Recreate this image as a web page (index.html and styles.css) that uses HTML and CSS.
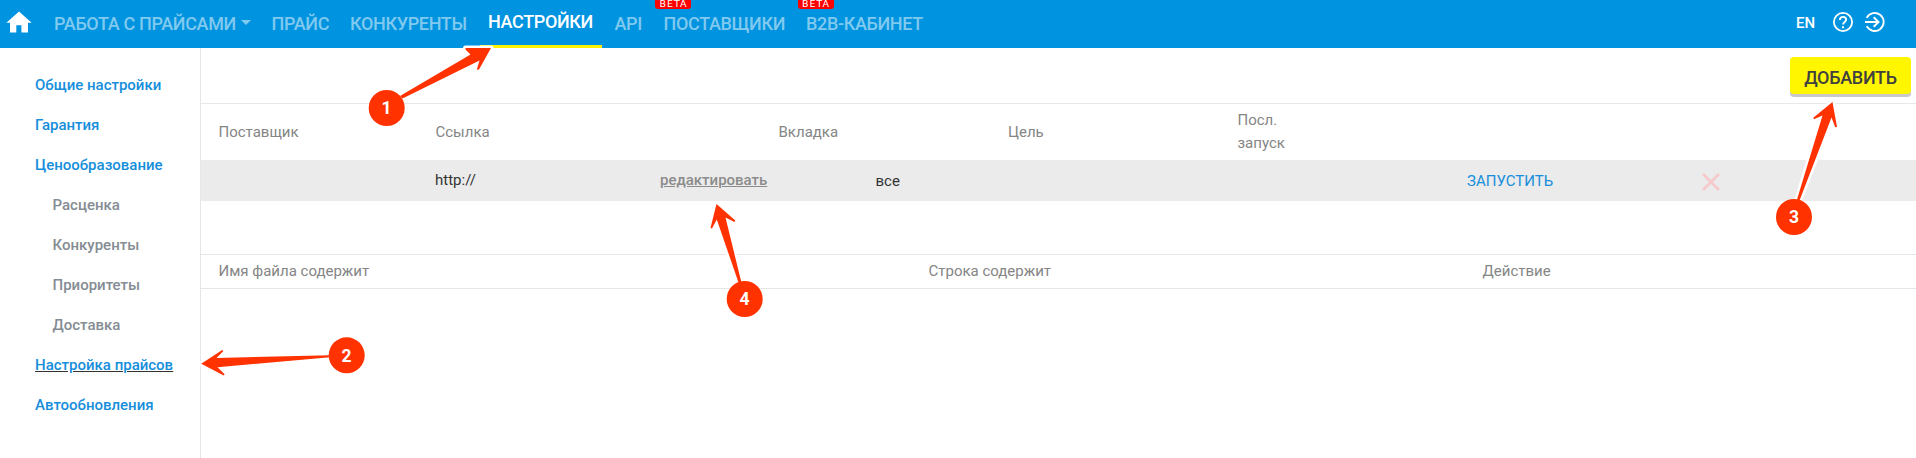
FILE: index.html
```html
<!DOCTYPE html>
<html lang="ru">
<head>
<meta charset="utf-8">
<title>Настройка прайсов</title>
<link rel="stylesheet" href="styles.css">
</head>
<body>
<header class="topbar">
  <a class="home"><svg width="26" height="22" viewBox="0 0 26 22"><path d="M13 0.6 0.4 11.8H4V21.4H10.3V14.2H15.4V21.4H22V11.8H25.6Z" fill="#fff"/></svg></a>
  <nav class="nav">
    <a class="nav-item nav-prices"><span>РАБОТА С ПРАЙСАМИ</span><i class="caret"></i></a>
    <a class="nav-item nav-price"><span>ПРАЙС</span></a>
    <a class="nav-item nav-rivals"><span>КОНКУРЕНТЫ</span></a>
    <a class="nav-item nav-settings active"><span>НАСТРОЙКИ</span></a>
    <a class="nav-item nav-api"><span>API</span></a>
    <a class="nav-item nav-suppliers"><span>ПОСТАВЩИКИ</span><b class="beta">BETA</b></a>
    <a class="nav-item nav-b2b"><span>B2B-КАБИНЕТ</span><b class="beta">BETA</b></a>
  </nav>
  <div class="tools">
    <span class="lang">EN</span>
    <svg class="help" width="20" height="20" viewBox="0 0 20 20" fill="none" stroke="#fff"><circle cx="10" cy="10" r="9.1" stroke-width="1.8"/><path d="M6.9 8c0-1.900 1.300-3.100 3.100-3.100S13.100 6.100 13.100 7.800C13.100 9.900 10 10.100 10 12.600" stroke-width="1.900"/><path d="M10 14.200v2" stroke-width="2"/></svg>
    <svg class="logout" width="20" height="20" viewBox="0 0 20 20" fill="none" stroke="#fff" stroke-width="1.8"><path d="M1.700 5.800A9 9 0 1 1 1.700 14.200"/><path d="M0 10H13M8.700 5.200 13.500 10 8.700 14.800" stroke-width="2"/></svg>
  </div>
</header>
<div class="layout">
  <aside class="sidebar">
    <a class="side-link">Общие настройки</a>
    <a class="side-link">Гарантия</a>
    <a class="side-link">Ценообразование</a>
    <a class="side-link sub">Расценка</a>
    <a class="side-link sub">Конкуренты</a>
    <a class="side-link sub">Приоритеты</a>
    <a class="side-link sub">Доставка</a>
    <a class="side-link current"><span>Настройка прайсов</span></a>
    <a class="side-link">Автообновления</a>
  </aside>
  <main class="content">
    <div class="actions"><button class="add">ДОБАВИТЬ</button></div>
    <div class="table-head">
      <span>Поставщик</span><span>Ссылка</span><span>Вкладка</span><span>Цель</span><span>Посл.<br>запуск</span>
    </div>
    <div class="table-row">
      <span class="url">http://</span>
      <a class="edit">редактировать</a>
      <span>все</span>
      <a class="run">ЗАПУСТИТЬ</a>
      <svg class="remove" width="18" height="18" viewBox="0 0 18 18"><path d="M1 1 17 17M17 1 1 17" stroke="#f6caca" stroke-width="2.6"/></svg>
    </div>
    <div class="rules-head">
      <span>Имя файла содержит</span><span>Строка содержит</span><span>Действие</span>
    </div>
  </main>
</div>
<svg class="callouts" width="1916" height="458" viewBox="0 0 1916 458">
  <g class="arrows">
    <path d="M400 96 470.500 54.500 465.500 49.500V48H491L479 69.500 476.800 69.800 479.500 60.500 402.500 98.500Z"/>
    <path d="M330 355.200 216.500 358 223.400 351 222.200 350 201.200 363.800 223.800 375.600 224.600 374.200 217.500 367.300 330 357.200Z"/>
    <path d="M1797 199.500 1822.500 115.500 1814 119.200 1813.300 117.800 1832.500 102 1837 127 1835.300 127.200 1831.500 117.500 1799.500 200.500Z"/>
    <path d="M741.300 282 725.500 217.500 734.500 222 735.300 220.500 716.500 204 710.500 228 712 228.600 716.800 219.500 738.500 282.500Z"/>
  </g>
  <g class="dots">
    <circle cx="386.700" cy="108" r="18"/><circle cx="346.700" cy="355.300" r="18"/><circle cx="1794" cy="217" r="18"/><circle cx="744.700" cy="299" r="18"/>
  </g>
  <g class="numbers">
    <text x="386.500" y="114">1</text><text x="346.500" y="362">2</text><text x="1794" y="223">3</text><text x="744.500" y="305">4</text>
  </g>
</svg>
</body>
</html>
```
FILE: styles.css
```css
* { box-sizing: border-box; }
body { margin: 0; height: 458px; overflow: hidden; position: relative; background: #fff; font: 15px/23px Roboto, sans-serif; color: #333; }
.topbar { display: flex; height: 48px; background: #0093df; }
.home { width: 54px; padding: 11px 0 0 6px; }
.nav { display: flex; flex: 1; }
.nav-item { position: relative; display: flex; height: 48px; line-height: 48px; font-size: 18px; font-weight: 500; color: #80c9ef; white-space: nowrap; letter-spacing: -0.35px; }
.nav-prices { width: 217.500px; }
.nav-price { width: 78.500px; }
.nav-rivals { width: 130px; }
.nav-settings { width: 122px; padding-left: 8px; border-bottom: 3px solid #fff200; color: #fff; line-height: 44px; }
.nav-api { width: 61.500px; padding-left: 12.500px; }
.nav-suppliers { width: 142.500px; }
.nav-b2b { width: 130px; }
.caret { margin: 20px 0 0 5px; width: 10px; height: 5px; border: 5px solid transparent; border-top-color: #80c9ef; border-bottom: 0; }
.beta { position: absolute; left: -8.500px; top: -4px; width: 36px; height: 13px; border-radius: 3px; background: #f00; color: #fff; font: 400 9.500px/15px "DejaVu Sans", sans-serif; letter-spacing: 1px; text-indent: 1px; text-align: center; }
.tools { display: flex; width: 120px; color: #fff; }
.lang { width: 37px; font-weight: 500; line-height: 46px; }
.help { margin-top: 12px; }
.logout { margin: 12px 0 0 12px; }
.layout { display: flex; height: 410px; }
.sidebar { width: 201px; padding: 17px 0 0 35px; border-right: 1px solid #e5e6e8; }
.side-link { display: block; height: 40px; line-height: 40px; font-weight: 500; color: #168edb; white-space: nowrap; }
.side-link.sub { padding-left: 17.500px; color: #858c93; }
.current span { text-decoration: underline; text-decoration-color: #333; }
.content { flex: 1; }
.actions { display: flex; justify-content: flex-end; height: 56px; padding: 9px 5px 0 0; border-bottom: 1px solid #e7e8ea; }
.add { width: 121px; height: 37px; padding: 4px 0 0; border: 0; border-radius: 4px; background: #fff600; box-shadow: 0 3px 0 #c9c9cb; color: #404040; font: 500 18px/33px Roboto, sans-serif; letter-spacing: -0.3px; }
.table-head { display: grid; grid-template-columns: 217px 343px 229.500px 229.500px 1fr; align-items: center; height: 56px; padding-left: 17.500px; color: #858585; }
.table-row { display: grid; grid-template-columns: 225px 215.500px 591.500px 234.500px 1fr; align-items: center; height: 41px; padding: 2px 0 0 234px; background: #ebebeb; }
.url, .edit { position: relative; top: -1px; }
.edit { font-weight: 500; color: #8c8c8c; text-decoration: underline; }
.run { color: #168edb; }
.rules-head { display: grid; grid-template-columns: 710px 554px 1fr; height: 35px; margin-top: 53px; padding-left: 17.500px; border: solid #e5e6e8; border-width: 1px 0; line-height: 33px; color: #858585; }
.callouts { position: absolute; left: 0; top: 0; }
.arrows { fill: #ff3200; stroke: #fff; stroke-width: 5px; stroke-linejoin: round; paint-order: stroke; }
.dots { fill: #ff3200; }
.numbers { fill: #fff; font: 700 17.500px Roboto, sans-serif; text-anchor: middle; }
```
